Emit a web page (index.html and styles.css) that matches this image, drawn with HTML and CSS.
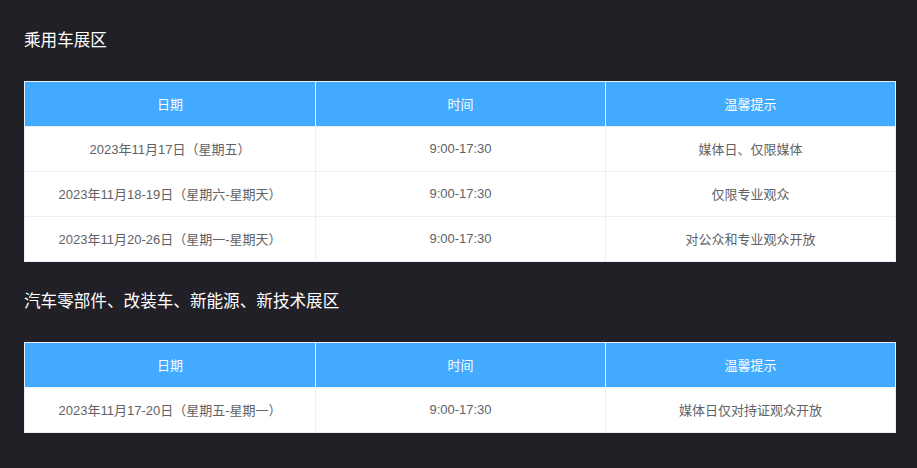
FILE: index.html
```html
<!DOCTYPE html>
<html lang="zh-CN">
<head>
<meta charset="utf-8">
<title>展区开放时间</title>
<link rel="stylesheet" href="styles.css">
</head>
<body>
<div class="page">
  <section class="zone">
    <h3 class="zone-title">乘用车展区</h3>
    <table class="schedule">
      <colgroup><col class="col-date"><col class="col-time"><col class="col-tip"></colgroup>
      <thead>
        <tr><th>日期</th><th>时间</th><th>温馨提示</th></tr>
      </thead>
      <tbody>
        <tr><td>2023年11月17日（星期五）</td><td>9:00-17:30</td><td>媒体日、仅限媒体</td></tr>
        <tr><td>2023年11月18-19日（星期六-星期天）</td><td>9:00-17:30</td><td>仅限专业观众</td></tr>
        <tr><td>2023年11月20-26日（星期一-星期天）</td><td>9:00-17:30</td><td>对公众和专业观众开放</td></tr>
      </tbody>
    </table>
  </section>
  <section class="zone">
    <h3 class="zone-title">汽车零部件、改装车、新能源、新技术展区</h3>
    <table class="schedule">
      <colgroup><col class="col-date"><col class="col-time"><col class="col-tip"></colgroup>
      <thead>
        <tr><th>日期</th><th>时间</th><th>温馨提示</th></tr>
      </thead>
      <tbody>
        <tr><td>2023年11月17-20日（星期五-星期一）</td><td>9:00-17:30</td><td>媒体日仅对持证观众开放</td></tr>
      </tbody>
    </table>
  </section>
</div>
</body>
</html>
```

FILE: styles.css
```css
html, body {
  margin: 0;
  padding: 0;
  background: #222027;
}
body {
  font-family: "Liberation Sans", "Noto Sans CJK SC", sans-serif;
}
.page {
  padding: 0 22px 0 24px;
  width: 871px;
}
.zone-title {
  margin: 0;
  height: 81px;
  line-height: 81px;
  font-size: 16.6px;
  font-weight: normal;
  color: #ffffff;
}
.zone + .zone .zone-title {
  height: 80px;
  line-height: 80px;
}
.schedule {
  width: 871px;
  border-collapse: collapse;
  table-layout: fixed;
  background: #ffffff;
  font-size: 13px;
}
.col-date { width: 291px; }
.col-time { width: 290px; }
.col-tip { width: 290px; }
.schedule th,
.schedule td {
  height: 42px;
  padding: 0 0 2px;
  text-align: center;
  vertical-align: middle;
  border: 1px solid #ebeef5;
}
.schedule th {
  background: #42aaff;
  color: #ffffff;
  font-weight: normal;
}
.schedule td {
  color: #606266;
}
```
